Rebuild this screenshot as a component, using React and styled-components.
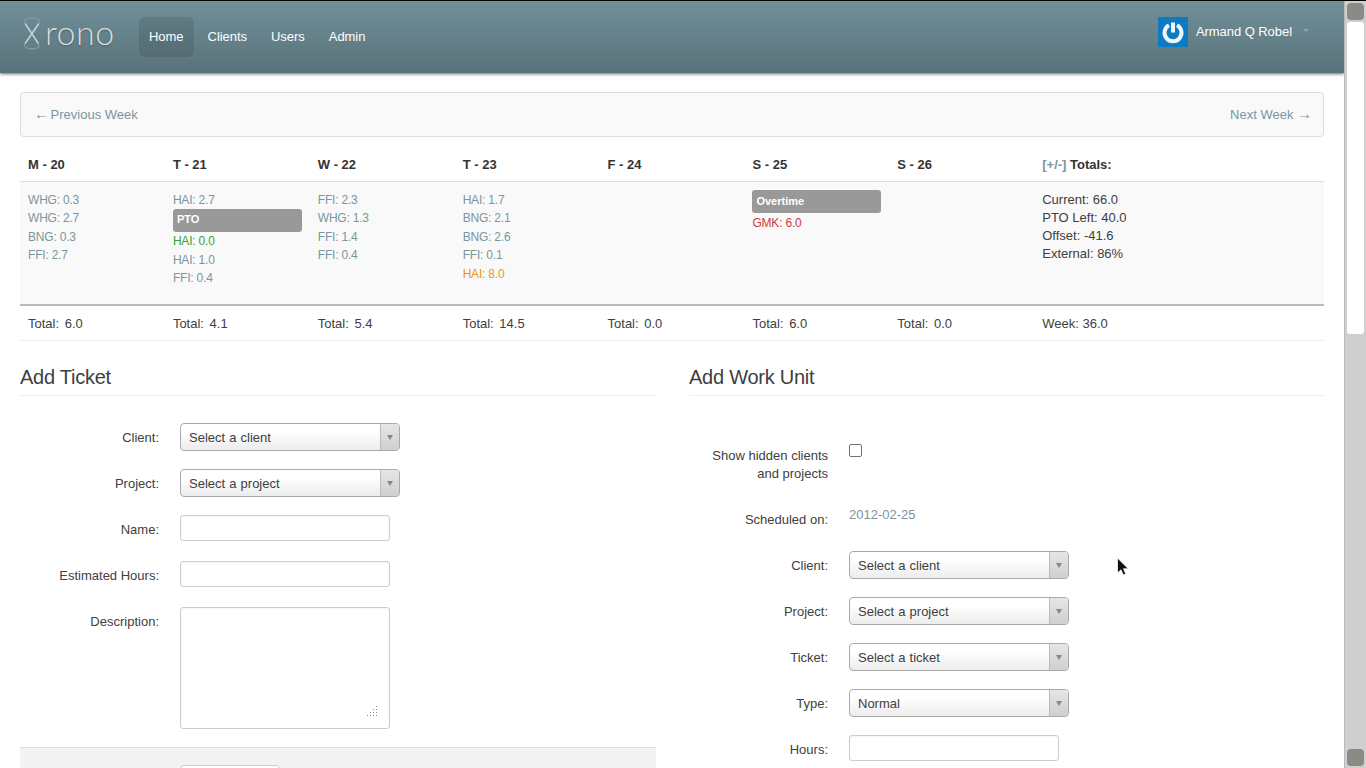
import React from 'react'
import styled, { createGlobalStyle } from 'styled-components'

const GlobalStyle = createGlobalStyle`
    html, body {
        margin: 0;
        height: 100%;
        overflow: hidden;
        background: #fff;
    }

    body {
        font-family: "Liberation Sans", Arial, sans-serif;
        font-size: 13px;
        line-height: 18px;
        color: #404040;
    }

    * {
        box-sizing: border-box;
    }
`

const linkColor = '#7a969d'

const Shell = styled.div`
    display: flex;
    position: relative;
    height: 768px;
    overflow: hidden;
    border-top: 1px solid #000;
`

const Main = styled.div`
    flex: 1;
    min-width: 0;
`

const Navbar = styled.header`
    display: flex;
    align-items: flex-start;
    justify-content: space-between;
    height: 72px;
    padding: 16px 35px 0 23px;
    background: linear-gradient(to bottom, #70909a, #5a727a);
    box-shadow: 0 1px 3px rgba(0, 0, 0, 0.6);
`

const NavLeft = styled.div`
    display: flex;
    align-items: flex-start;
`

const Logo = styled.div`
    display: flex;
    align-items: flex-start;
    gap: 4px;
    width: 116px;
    height: 33px;
    color: #d4dcdd;
    font-family: Lato, sans-serif;
    font-size: 34px;
    font-weight: 300;
    letter-spacing: 0.5px;
    line-height: 30px;
    text-shadow: 0 1px 2px rgba(0, 0, 0, 0.25);
`

const NavList = styled.nav`
    display: flex;
    gap: 4px;
`

const NavLink = styled.a`
    display: block;
    height: 40px;
    padding: 10px;
    border-radius: 6px;
    color: #fff;
    letter-spacing: -0.04px;
    line-height: 20px;
    background: ${props => props.$active ? 'rgba(0, 0, 0, 0.1)' : 'transparent'};
`

const UserMenu = styled.div`
    display: flex;
    align-items: center;
    height: 30px;
    color: #fff;
    letter-spacing: -0.05px;
`

const Avatar = styled.div`
    display: flex;
    align-items: center;
    justify-content: center;
    width: 30px;
    height: 30px;
    margin-right: 8px;
    background: #0d7bc2;
`

const Caret = styled.span`
    width: 0;
    height: 0;
    margin: -3px 0 0 11px;
    border-style: solid;
    border-width: 3px 3px 0;
    border-color: #93a8ae transparent transparent;
`

const Content = styled.main`
    padding: 19px 20px 0;
`

const Pager = styled.div`
    display: flex;
    justify-content: space-between;
    height: 45px;
    padding: 12px 13px;
    border: 1px solid #ddd;
    border-radius: 4px;
    background: #f9f9f9;
    color: ${linkColor};
`

const Arrow = styled.span`
    display: inline-block;
    width: 13px;
    font-size: 15px;
    font-weight: normal;
`

const WeekRow = styled.div`
    display: grid;
    grid-template-columns: repeat(7, 1fr) 2fr;
`

const HeadRow = styled(WeekRow)`
    height: 45px;
    padding-top: 19px;
    border-bottom: 1px solid #ddd;
    color: #333;
    font-weight: bold;
`

const BodyRow = styled(WeekRow)`
    height: 124px;
    padding-top: 9px;
    border-bottom: 2px solid #bbb;
    background: #f9f9f9;
`

const FootRow = styled(WeekRow)`
    height: 35px;
    padding-top: 9px;
    border-bottom: 1px solid #eee;
`

const Cell = styled.div`
    padding: 0 8px;
    min-width: 0;
`

const DayTotal = styled(Cell)`
    word-spacing: 2px;
`

const Toggle = styled.span`
    color: ${linkColor};
`

const Entry = styled.div`
    height: 18.4px;
    color: ${props => props.$color || linkColor};
    font-size: 12px;
    letter-spacing: -0.2px;
    line-height: 18.4px;
`

const Banner = styled.div`
    height: 23px;
    padding: 2px 4px;
    border-radius: 3px;
    background: #999;
    color: #fff;
    font-size: 11px;
    font-weight: bold;
    line-height: 17px;

    &:first-child {
        margin: -1px 0 1px;
        padding-top: 3px;
    }
`

const TotalLine = styled.div`
    height: 18px;
`

const Forms = styled.div`
    display: grid;
    grid-template-columns: 636px 635px;
    column-gap: 33px;
    padding-top: 18px;
`

const Section = styled.section`
    min-width: 0;
`

const Heading = styled.h3`
    height: 37px;
    margin: 0;
    border-bottom: 1px solid #eee;
    color: #404040;
    font-size: 20px;
    font-weight: normal;
    letter-spacing: -0.25px;
    line-height: 36px;
`

const FormBody = styled.form`
    display: flex;
    flex-direction: column;
    gap: 18px;
    padding-top: ${props => props.$top}px;
`

const Row = styled.div`
    display: flex;
    min-height: ${props => props.$minHeight || 28}px;
`

const Label = styled.label`
    flex: none;
    width: 139px;
    margin-right: 21px;
    padding-top: 6px;
    text-align: right;
`

const SelectBox = styled.div`
    display: flex;
    width: 220px;
    height: 28px;
    border: 1px solid #aaa;
    border-radius: 4px;
    background: linear-gradient(to bottom, #fff 30%, #ececec);
    overflow: hidden;
`

const SelectText = styled.span`
    flex: 1;
    padding-left: 8px;
    line-height: 28px;
    word-spacing: 0.5px;
`

const SelectArrow = styled.span`
    display: flex;
    align-items: center;
    justify-content: center;
    width: 19px;
    border-left: 1px solid #bbb;
    background: linear-gradient(to bottom, #e6e6e6, #cfcfcf);

    &::after {
        content: '';
        border-style: solid;
        border-width: 5px 3.5px 0;
        border-color: #888 transparent transparent;
    }
`

const TextInput = styled.input`
    display: block;
    width: 210px;
    height: 26px;
    padding: 4px;
    border: 1px solid #ccc;
    border-radius: 3px;
    background: #fff;
    box-shadow: inset 0 1px 2px rgba(0, 0, 0, 0.05);
    font: inherit;
`

const AreaWrap = styled.div`
    position: relative;
    width: 210px;
    height: 122px;
`

const TextArea = styled.textarea`
    display: block;
    width: 210px;
    height: 122px;
    padding: 4px;
    border: 1px solid #ccc;
    border-radius: 3px;
    background: #fff;
    box-shadow: inset 0 1px 2px rgba(0, 0, 0, 0.05);
    font: inherit;
    resize: none;
`

const Grip = styled.svg`
    position: absolute;
    right: 12px;
    bottom: 12px;
`

const Check = styled.input`
    appearance: none;
    width: 13px;
    height: 13px;
    margin: 3px 0 0;
    border: 1px solid #707070;
    border-radius: 2px;
    background: #fff;
`

const DateValue = styled.span`
    padding-top: 1px;
    color: ${linkColor};
`

const Actions = styled.div`
    height: 60px;
    padding: 17px 160px;
    border-top: 1px solid #ddd;
    background: #f3f3f3;
`

const ActionButton = styled.div`
    width: 100px;
    height: 30px;
    border: 1px solid #ccc;
    border-radius: 4px;
    background: #fff;
`

const Scrollbar = styled.aside`
    display: flex;
    flex-direction: column;
    flex: none;
    width: 22px;
    padding: 2px;
    border-left: 1px solid #b8b8b8;
    background: #cfcfcf;
`

const ScrollButton = styled.div`
    flex: none;
    width: 17px;
    height: 17px;
    border-radius: 4px;
    background: #8b8b83;
`

const ScrollThumb = styled.div`
    flex: none;
    width: 17px;
    height: 312px;
    margin-top: 2px;
    border-radius: 3px;
    background: #fff;
`

const ScrollTrack = styled.div`
    flex: 1;
`

const Pointer = styled.svg`
    position: absolute;
    left: 1116px;
    top: 556px;
`

const days = [
    {
        title: 'M - 20',
        total: '6.0',
        entries: [['WHG: 0.3'], ['WHG: 2.7'], ['BNG: 0.3'], ['FFI: 2.7']]
    },
    {
        title: 'T - 21',
        total: '4.1',
        entries: [['HAI: 2.7'], ['PTO', 'banner'], ['HAI: 0.0', '#36a336'], ['HAI: 1.0'], ['FFI: 0.4']]
    },
    {
        title: 'W - 22',
        total: '5.4',
        entries: [['FFI: 2.3'], ['WHG: 1.3'], ['FFI: 1.4'], ['FFI: 0.4']]
    },
    {
        title: 'T - 23',
        total: '14.5',
        entries: [['HAI: 1.7'], ['BNG: 2.1'], ['BNG: 2.6'], ['FFI: 0.1'], ['HAI: 8.0', '#f0950c']]
    },
    { title: 'F - 24', total: '0.0', entries: [] },
    {
        title: 'S - 25',
        total: '6.0',
        entries: [['Overtime', 'banner'], ['GMK: 6.0', '#cc3b3b']]
    },
    { title: 'S - 26', total: '0.0', entries: [] }
]

const totals = ['Current: 66.0', 'PTO Left: 40.0', 'Offset: -41.6', 'External: 86%']

const gripDots = [
    [0, 9], [3, 9], [6, 9], [9, 9],
    [3, 6], [6, 6], [9, 6],
    [6, 3], [9, 3],
    [9, 0]
]

const LogoMark = () => (
    <svg width="18" height="33" viewBox="0 0 18 33" fill="none" strokeLinecap="round">
        <g stroke="#82959a" strokeWidth="1.5">
            <path d="M2.500 7C1 4.500 1.500 2.500 5 1.500 8 .7 12 .9 14.500 2c2 1 2.300 2.800 1 5" />
            <path d="M2.500 26c-1.500 2.300-1.300 4.300 2 5.200 3 .8 6.500 .8 9 0 2.700-1 2.700-3 1.500-5.200" />
        </g>
        <path d="M15.500 7L2.500 26M2.500 7L15 26" stroke="#ccd6d8" strokeWidth="1.400" />
    </svg>
)

const PowerIcon = () => (
    <svg width="24" height="24" viewBox="0 0 24 24" fill="none" stroke="#eef6fb" strokeWidth="4">
        <path d="M8 5.300a8.500 8.500 0 1 0 8 0" />
        <path d="M12 2.500v10" />
    </svg>
)

const Select = ({ children }) => (
    <SelectBox>
        <SelectText>{children}</SelectText>
        <SelectArrow />
    </SelectBox>
)

const Field = ({ label, minHeight, children }) => (
    <Row $minHeight={minHeight}>
        <Label>{label}</Label>
        {children}
    </Row>
)

const App = () => (
    <Shell>
        <GlobalStyle />
        <Main>
            <Navbar>
                <NavLeft>
                    <Logo>
                        <LogoMark />
                        rono
                    </Logo>
                    <NavList>
                        <NavLink $active>Home</NavLink>
                        <NavLink>Clients</NavLink>
                        <NavLink>Users</NavLink>
                        <NavLink>Admin</NavLink>
                    </NavList>
                </NavLeft>
                <UserMenu>
                    <Avatar><PowerIcon /></Avatar>
                    Armand Q Robel
                    <Caret />
                </UserMenu>
            </Navbar>
            <Content>
                <Pager>
                    <span><Arrow>←</Arrow> Previous Week</span>
                    <span>Next Week <Arrow>→</Arrow></span>
                </Pager>
                <HeadRow>
                    {days.map(day => <Cell key={day.title}>{day.title}</Cell>)}
                    <Cell><Toggle>[+/-]</Toggle> Totals:</Cell>
                </HeadRow>
                <BodyRow>
                    {days.map(day => (
                        <Cell key={day.title}>
                            {day.entries.map(([text, kind], i) => (
                                kind === 'banner'
                                    ? <Banner key={i}>{text}</Banner>
                                    : <Entry key={i} $color={kind}>{text}</Entry>
                            ))}
                        </Cell>
                    ))}
                    <Cell>
                        {totals.map(text => <TotalLine key={text}>{text}</TotalLine>)}
                    </Cell>
                </BodyRow>
                <FootRow>
                    {days.map(day => <DayTotal key={day.title}>Total: {day.total}</DayTotal>)}
                    <Cell>Week: 36.0</Cell>
                </FootRow>
                <Forms>
                    <Section>
                        <Heading>Add Ticket</Heading>
                        <FormBody $top={27}>
                            <Field label="Client:"><Select>Select a client</Select></Field>
                            <Field label="Project:"><Select>Select a project</Select></Field>
                            <Field label="Name:"><TextInput /></Field>
                            <Field label="Estimated Hours:"><TextInput /></Field>
                            <Field label="Description:" minHeight={122}>
                                <AreaWrap>
                                    <TextArea />
                                    <Grip width="11" height="11" viewBox="0 0 11 11" fill="#8a8a8a">
                                        {gripDots.map(([x, y]) => <rect key={`${x}-${y}`} x={x} y={y} width="1" height="1" />)}
                                    </Grip>
                                </AreaWrap>
                            </Field>
                            <Actions><ActionButton /></Actions>
                        </FormBody>
                    </Section>
                    <Section>
                        <Heading>Add Work Unit</Heading>
                        <FormBody $top={45}>
                            <Field label="Show hidden clients and projects" minHeight={46}>
                                <Check type="checkbox" />
                            </Field>
                            <Field label="Scheduled on:"><DateValue>2012-02-25</DateValue></Field>
                            <Field label="Client:"><Select>Select a client</Select></Field>
                            <Field label="Project:"><Select>Select a project</Select></Field>
                            <Field label="Ticket:"><Select>Select a ticket</Select></Field>
                            <Field label="Type:"><Select>Normal</Select></Field>
                            <Field label="Hours:"><TextInput /></Field>
                        </FormBody>
                    </Section>
                </Forms>
            </Content>
        </Main>
        <Scrollbar>
            <ScrollButton />
            <ScrollThumb />
            <ScrollTrack />
            <ScrollButton />
        </Scrollbar>
        <Pointer width="14" height="20" viewBox="0 0 14 20">
            <path d="M1.500 1v15l3.500-3.200 2.300 5.200 2.500-1-2.300-5.200h4.800z" fill="#111" stroke="#fff" strokeWidth="0.8" />
        </Pointer>
    </Shell>
)

export default App
